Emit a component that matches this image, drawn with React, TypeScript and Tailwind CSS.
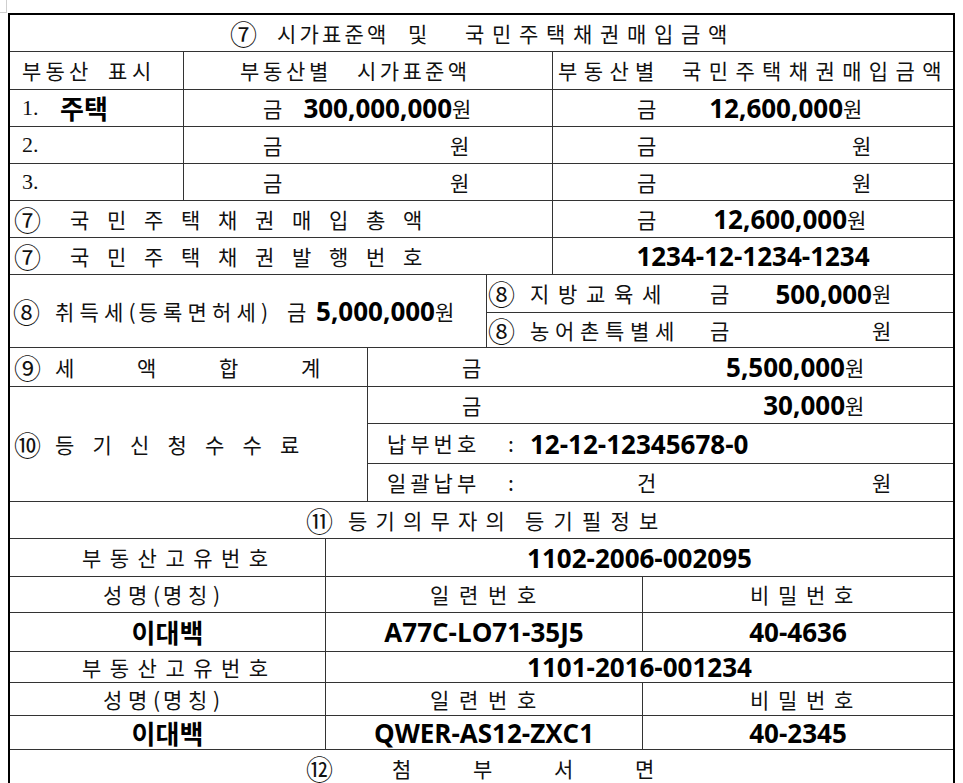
import React from 'react';

// bold figure font (amounts, numbers, names)
const V = "font-['Open_Sans','Noto_Sans_CJK_KR',sans-serif] font-bold text-[26px] text-black";
const VK = "font-['Noto_Sans_CJK_KR',sans-serif] font-bold text-[26px] text-black";
const SERIF = "font-['Liberation_Serif',serif] text-[22px]";
const LINE = 'border-[#333]';

function Seg({ w = '', className = '', children }: { w?: string; className?: string; children: React.ReactNode }) {
  return <span className={`inline-block shrink-0 whitespace-nowrap ${w} ${className}`}>{children}</span>;
}

// circled section number, drawn a bit larger than the label text
function Num({ w, children }: { w: string; children: React.ReactNode }) {
  return <Seg w={w} className="text-[27px]">{children}</Seg>;
}

// spaced-out label: one fixed-width box per character
function Spread({ text, cw, pw = 'w-[10px]' }: { text: string; cw: string; pw?: string }) {
  return (
    <span className="inline-flex shrink-0">
      {text.split('').map((ch, i) => (
        <span key={i} className={`inline-block shrink-0 ${/[():]/.test(ch) ? pw : cw}`}>
          {ch}
        </span>
      ))}
    </span>
  );
}

// amount that ends right where "원" starts
function Amount({ w, children }: { w: string; children: React.ReactNode }) {
  return (
    <span className={`flex shrink-0 justify-end ${w}`}>
      <span className={`whitespace-nowrap ${V}`}>{children}</span>
    </span>
  );
}

function Row({ h, last, children }: { h: string; last?: boolean; children: React.ReactNode }) {
  return <div className={`flex ${h} ${last ? '' : `border-b ${LINE}`}`}>{children}</div>;
}

export default function App() {
  return (
    <div className="min-h-screen bg-white font-['Noto_Sans_CJK_KR',sans-serif] text-[21px] leading-none text-[#111]">
      {/* sheet corner */}
      <div className="h-[13px]">
        <div className="h-[13px] w-[7px] border-r border-b border-[#cfcfcf]" />
      </div>

      <div className="ml-[8px] w-[947px] border-2 border-b-0 border-black">
        {/* ⑦ title */}
        <Row h="h-[37px]">
          <div className="flex flex-1 items-center pl-[220px]">
            <Num w="w-[47px]">⑦</Num>
            <Seg w="w-[131px]"><Spread text="시가표준액" cw="w-[22.5px]" /></Seg>
            <Seg w="w-[57px]">및</Seg>
            <Spread text="국민주택채권매입금액" cw="w-[27px]" />
          </div>
        </Row>

        {/* headers */}
        <Row h="h-[38px]">
          <div className={`flex w-[174px] items-center border-r ${LINE} pl-[12px]`}>
            <Seg w="w-[86px]"><Spread text="부동산" cw="w-[23.5px]" /></Seg>
            <Spread text="표시" cw="w-[24px]" />
          </div>
          <div className={`flex w-[369px] items-center border-r ${LINE} pl-[56px]`}>
            <Seg w="w-[117px]"><Spread text="부동산별" cw="w-[23px]" /></Seg>
            <Spread text="시가표준액" cw="w-[22.7px]" />
          </div>
          <div className="flex flex-1 items-center pl-[5px]">
            <Seg w="w-[124px]"><Spread text="부동산별" cw="w-[25.7px]" /></Seg>
            <Spread text="국민주택채권매입금액" cw="w-[26.7px]" />
          </div>
        </Row>

        {/* 1. 주택 */}
        <Row h="h-[37px]">
          <div className={`flex w-[174px] items-center border-r ${LINE} pl-[12px]`}>
            <Seg w="w-[38px]" className={SERIF}>1.</Seg>
            <Seg className={VK}>주택</Seg>
          </div>
          <div className={`flex w-[369px] items-center border-r ${LINE} pl-[79px]`}>
            <Seg w="w-[40px]">금</Seg>
            <Amount w="w-[149px]">300,000,000</Amount>
            <Seg>원</Seg>
          </div>
          <div className="flex flex-1 items-center pl-[84px]">
            <Seg w="w-[83px]">금</Seg>
            <Amount w="w-[123px]">12,600,000</Amount>
            <Seg>원</Seg>
          </div>
        </Row>

        {['2.', '3.'].map((n) => (
          <Row key={n} h="h-[37px]">
            <div className={`flex w-[174px] items-center border-r ${LINE} pl-[12px]`}>
              <Seg className={SERIF}>{n}</Seg>
            </div>
            <div className={`flex w-[369px] items-center border-r ${LINE} pl-[79px]`}>
              <Seg w="w-[187px]">금</Seg>
              <Seg>원</Seg>
            </div>
            <div className="flex flex-1 items-center pl-[84px]">
              <Seg w="w-[215px]">금</Seg>
              <Seg>원</Seg>
            </div>
          </Row>
        ))}

        {/* ⑦ 총액 */}
        <Row h="h-[37px]">
          <div className={`flex w-[543px] items-center border-r ${LINE} pl-[4px]`}>
            <Num w="w-[56px]">⑦</Num>
            <Spread text="국민주택채권매입총액" cw="w-[37px]" />
          </div>
          <div className="flex flex-1 items-center pl-[84px]">
            <Seg w="w-[81px]">금</Seg>
            <Amount w="w-[129px]">12,600,000</Amount>
            <Seg>원</Seg>
          </div>
        </Row>

        {/* ⑦ 발행번호 */}
        <Row h="h-[37px]">
          <div className={`flex w-[543px] items-center border-r ${LINE} pl-[4px]`}>
            <Num w="w-[56px]">⑦</Num>
            <Spread text="국민주택채권발행번호" cw="w-[37px]" />
          </div>
          <div className="flex flex-1 items-center justify-center">
            <Seg className={V}>1234-12-1234-1234</Seg>
          </div>
        </Row>

        {/* ⑧ 취득세 */}
        <Row h="h-[73px]">
          <div className={`flex w-[477px] items-center border-r ${LINE} pl-[3px]`}>
            <Num w="w-[42px]">⑧</Num>
            <Seg w="w-[232px]"><Spread text="취득세(등록면허세)" cw="w-[24.5px]" /></Seg>
            <Seg w="w-[35px]">금</Seg>
            <Amount w="w-[113px]">5,000,000</Amount>
            <Seg>원</Seg>
          </div>
          <div className="flex flex-1 flex-col">
            <div className={`flex h-[38px] items-center border-b ${LINE} pl-[1px]`}>
              <Num w="w-[42px]">⑧</Num>
              <Seg w="w-[180px]"><Spread text="지방교육세" cw="w-[28px]" /></Seg>
              <Seg w="w-[63px]">금</Seg>
              <Amount w="w-[99px]">500,000</Amount>
              <Seg>원</Seg>
            </div>
            <div className="flex flex-1 items-center pl-[1px]">
              <Num w="w-[42px]">⑧</Num>
              <Seg w="w-[180px]"><Spread text="농어촌특별세" cw="w-[25px]" /></Seg>
              <Seg w="w-[162px]">금</Seg>
              <Seg>원</Seg>
            </div>
          </div>
        </Row>

        {/* ⑨ 세액합계 */}
        <Row h="h-[39px]">
          <div className={`flex w-[358px] items-center border-r ${LINE} pl-[4px]`}>
            <Num w="w-[41px]">⑨</Num>
            <Spread text="세액합계" cw="w-[82px]" />
          </div>
          <div className="flex flex-1 items-center pl-[94px]">
            <Seg w="w-[263px]">금</Seg>
            <Amount w="w-[120px]">5,500,000</Amount>
            <Seg>원</Seg>
          </div>
        </Row>

        {/* ⑩ 등기신청수수료 */}
        <Row h="h-[115px]">
          <div className={`flex w-[358px] items-center border-r ${LINE} pl-[4px]`}>
            <Num w="w-[41px]">⑩</Num>
            <Spread text="등기신청수수료" cw="w-[37.5px]" />
          </div>
          <div className="flex flex-1 flex-col">
            <div className={`flex h-[37px] items-center border-b ${LINE} pl-[94px]`}>
              <Seg w="w-[301px]">금</Seg>
              <Amount w="w-[82px]">30,000</Amount>
              <Seg>원</Seg>
            </div>
            <div className={`flex h-[40px] items-center border-b ${LINE} pl-[19px]`}>
              <Seg w="w-[121px]"><Spread text="납부번호" cw="w-[23.3px]" /></Seg>
              <Seg w="w-[22px]">:</Seg>
              <Seg className={V}>12-12-12345678-0</Seg>
            </div>
            <div className="flex flex-1 items-center pl-[19px]">
              <Seg w="w-[121px]"><Spread text="일괄납부" cw="w-[23.3px]" /></Seg>
              <Seg w="w-[129px]">:</Seg>
              <Seg w="w-[235px]">건</Seg>
              <Seg>원</Seg>
            </div>
          </div>
        </Row>

        {/* ⑪ 등기필정보 */}
        <Row h="h-[37px]">
          <div className="flex flex-1 items-center pl-[296px]">
            <Num w="w-[42px]">⑪</Num>
            <Seg w="w-[177px]"><Spread text="등기의무자의" cw="w-[27.5px]" /></Seg>
            <Spread text="등기필정보" cw="w-[28.5px]" />
          </div>
        </Row>

        {[
          { no: '1102-2006-002095', serial: 'A77C-LO71-35J5', pw: '40-4636', h1: 'h-[38px]', h2: 'h-[36px]', h3: 'h-[39px]' },
          { no: '1101-2016-001234', serial: 'QWER-AS12-ZXC1', pw: '40-2345', h1: 'h-[31px]', h2: 'h-[33px]', h3: 'h-[34px]' },
        ].map((d) => (
          <React.Fragment key={d.no}>
            <Row h={d.h1}>
              <div className={`flex w-[316px] items-center border-r ${LINE} pl-[72px]`}>
                <Spread text="부동산고유번호" cw="w-[27.8px]" />
              </div>
              <div className="flex flex-1 items-center justify-center">
                <Seg className={V}>{d.no}</Seg>
              </div>
            </Row>
            <Row h={d.h2}>
              <div className={`flex w-[316px] items-center border-r ${LINE} pl-[93px]`}>
                <Spread text="성명(명칭)" cw="w-[25px]" />
              </div>
              <div className={`flex w-[317px] items-center border-r ${LINE} pl-[104px]`}>
                <Spread text="일련번호" cw="w-[29px]" />
              </div>
              <div className="flex flex-1 items-center pl-[107px]">
                <Spread text="비밀번호" cw="w-[28px]" />
              </div>
            </Row>
            <Row h={d.h3}>
              <div className={`flex w-[316px] items-center justify-center border-r ${LINE}`}>
                <Seg className={VK}>이대백</Seg>
              </div>
              <div className={`flex w-[317px] items-center justify-center border-r ${LINE}`}>
                <Seg className={V}>{d.serial}</Seg>
              </div>
              <div className="flex flex-1 items-center justify-center">
                <Seg className={V}>{d.pw}</Seg>
              </div>
            </Row>
          </React.Fragment>
        ))}

        {/* ⑫ 첨부서면 */}
        <Row h="h-[36px]" last>
          <div className="flex flex-1 items-center pl-[296px]">
            <Num w="w-[86px]">⑫</Num>
            <Spread text="첨부서면" cw="w-[81px]" />
          </div>
        </Row>
      </div>
    </div>
  );
}
